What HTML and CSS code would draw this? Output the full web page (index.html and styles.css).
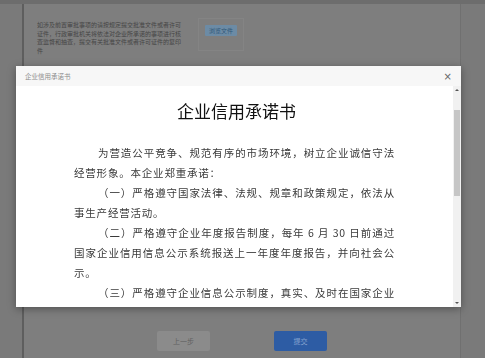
FILE: index.html
```html
<!DOCTYPE html>
<html>
<head>
  <title>企业信用承诺书</title>
  <link rel="stylesheet" href="styles.css">
</head>
<body>
  <div class="topbar"></div>
  <div class="panel">
    <div class="notice">
      <p class="notice-text">如涉及前置审批事项的请按规定提交批准文件或者许可证件，行政审批机关将依法对企业所承诺的事项进行核查监督和抽查，提交有关批准文件或者许可证件的复印件</p>
      <span class="notice-cell"><button class="btn-file">浏览文件</button></span>
    </div>
    <div class="actions">
      <button class="btn btn-prev">上一步</button>
      <button class="btn btn-submit">提交</button>
    </div>
  </div>

  <div class="modal">
    <div class="modal-head">
      <span class="modal-title">企业信用承诺书</span>
      <span class="modal-close">&times;</span>
    </div>
    <div class="modal-body">
      <div class="doc">
        <h1 class="doc-title">企业信用承诺书</h1>
        <p class="para">
          <span class="ln first full">为营造公平竞争、规范有序的市场环境，树立企业诚信守法</span>
          <span class="ln">经营形象。本企业郑重承诺：</span>
        </p>
        <p class="para">
          <span class="ln first full">（一）严格遵守国家法律、法规、规章和政策规定，依法从</span>
          <span class="ln">事生产经营活动。</span>
        </p>
        <p class="para">
          <span class="ln first full">（二）严格遵守企业年度报告制度，每年 6 月 30 日前通过</span>
          <span class="ln full">国家企业信用信息公示系统报送上一年度年度报告，并向社会公</span>
          <span class="ln">示。</span>
        </p>
        <p class="para">
          <span class="ln first full">（三）严格遵守企业信息公示制度，真实、及时在国家企业</span>
        </p>
      </div>
      <div class="scrollbar">
        <span class="arrow up"></span>
        <span class="thumb"></span>
        <span class="arrow down"></span>
      </div>
    </div>
  </div>
</body>
</html>
```

FILE: styles.css
```css
html, body {
    margin: 0;
    height: 358px;
    overflow: hidden;
}
body {
    font-family: "Noto Sans CJK SC", "Noto Sans", sans-serif;
    background-color: #7a7a7a;
}
.topbar {
    height: 4px;
    background-color: #6d6d6d;
}
.panel {
    display: flex;
    flex-direction: column;
    height: 354px;
    margin-left: 22px;
    width: 439px;
    border-left: 2px solid #5e5e5e;
    border-right: 1px solid #707070;
    background-color: #7e7e7e;
    box-sizing: border-box;
}
.notice {
    display: flex;
    align-items: flex-start;
    padding: 17px 0 0 13px;
}
.notice-text {
    width: 146px;
    margin: 0;
    font-size: 6px;
    line-height: 8.5px;
    color: #454545;
}
.notice-cell {
    margin: -3px 0 0 15px;
    padding: 6px 6px 14px 6px;
    border: 1px solid #848484;
}
.btn-file {
    display: block;
    width: 32px;
    height: 11px;
    padding: 0;
    border: none;
    border-radius: 1px;
    background-color: #6c8ba5;
    color: #2f5777;
    font-family: inherit;
    font-size: 6px;
    line-height: 11px;
}
.actions {
    display: flex;
    justify-content: center;
    gap: 64px;
    margin-top: auto;
    padding: 0 0 7px 0;
}
.btn {
    width: 53px;
    height: 20px;
    padding: 0;
    border: none;
    border-radius: 2px;
    font-family: inherit;
    font-size: 7px;
}
.btn-prev {
    background-color: #8b8b8b;
    color: #616161;
}
.btn-submit {
    background-color: #2d5ca4;
    color: #86a3cf;
}

/* dialog */
.modal {
    position: fixed;
    left: 16px;
    top: 66px;
    width: 445px;
    height: 241px;
    display: flex;
    flex-direction: column;
    background-color: #fff;
    box-shadow: 0 2px 8px rgba(0, 0, 0, 0.35);
}
.modal-head {
    display: flex;
    align-items: center;
    justify-content: space-between;
    height: 20px;
    padding: 0 9px 0 9px;
    background-color: #f7f7f7;
}
.modal-title {
    font-size: 6.5px;
    color: #8c8c8c;
}
.modal-close {
    font-family: "DejaVu Sans", sans-serif;
    font-size: 10px;
    color: #666;
}
.modal-body {
    display: flex;
    flex: 1;
    overflow: hidden;
}
.doc {
    flex: 1;
    padding: 0 58px 0 58px;
    overflow: hidden;
}
.doc-title {
    margin: 13px 0 20px 4px;
    font-size: 17px;
    font-weight: 400;
    line-height: 24px;
    text-align: center;
    color: #111;
}
.para {
    margin: 0;
    font-size: 10.5px;
    line-height: 20px;
    letter-spacing: 0.8px;
    color: #3a3a3a;
}
.ln {
    display: block;
    white-space: nowrap;
}
.ln.first {
    padding-left: 24px;
}
.ln.full {
    text-align: justify;
    text-align-last: justify;
}
.scrollbar {
    display: flex;
    flex-direction: column;
    align-items: center;
    width: 8px;
    background-color: #f1f1f1;
}
.arrow {
    width: 0;
    height: 0;
    border-left: 2px solid transparent;
    border-right: 2px solid transparent;
}
.arrow.up {
    margin-top: 3px;
    border-bottom: 2px solid #555;
}
.arrow.down {
    margin-top: auto;
    margin-bottom: 3px;
    border-top: 2px solid #555;
}
.thumb {
    width: 6px;
    height: 86px;
    margin-top: 19px;
    background-color: #c6c6c6;
}
```
